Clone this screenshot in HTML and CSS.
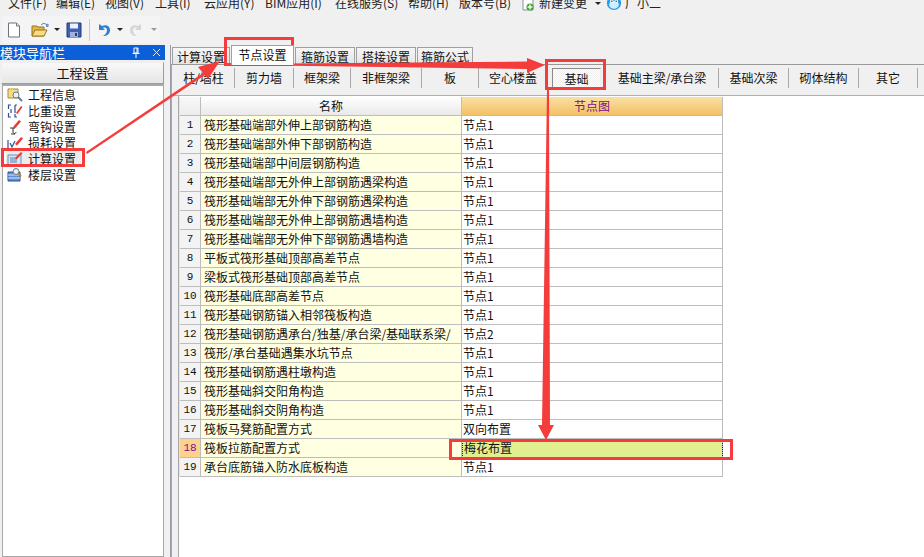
FILE: index.html
```html
<!DOCTYPE html>
<html lang="zh">
<head>
<meta charset="utf-8">
<title>工程设置</title>
<link rel="stylesheet" href="styles.css">
</head>
<body>
<div class="app">
  <header class="top">
    <nav class="menu">
      <span>文件(F)</span><span>编辑(E)</span><span>视图(V)</span><span>工具(I)</span><span>云应用(Y)</span><span>BIM应用(I)</span><span>在线服务(S)</span><span>帮助(H)</span><span>版本号(B)</span>
      <span class="menu-extra">
        <svg class="ic16" viewBox="0 0 16 16"><path d="M3 1h7l3 3v11H3z" fill="#fff" stroke="#7f93a8"/><path d="M10 1v3h3" fill="#dfe8f0" stroke="#7f93a8"/><circle cx="10" cy="12" r="3.6" fill="#3fa52d"/><path d="M10 9.6v4.8M7.6 12h4.8" stroke="#fff" stroke-width="1.4"/></svg>
        <span class="menu-new">新建变更</span>
        <i class="caret dark"></i>
        <svg class="mascot" viewBox="0 0 18 18"><circle cx="9" cy="9" r="8" fill="#2a9be8"/><ellipse cx="9" cy="11" rx="5.5" ry="4.5" fill="#cfeeff"/><circle cx="6.4" cy="7" r="1.8" fill="#fff"/><circle cx="11.6" cy="7" r="1.8" fill="#fff"/><circle cx="6.6" cy="7" r=".8" fill="#123"/><circle cx="11.4" cy="7" r=".8" fill="#123"/></svg>
        <span>广小二</span>
      </span>
    </nav>
    <div class="toolbar">
      <svg class="ic16" viewBox="0 0 16 16"><path d="M2.5 1h8l3 3v11h-11z" fill="#fff" stroke="#6d7480"/><path d="M10.500 1v3h3" fill="#e4e8ee" stroke="#6d7480"/></svg>
      <svg class="ic18 open" viewBox="0 0 18 16"><path d="M1 4h5l1 1h6v9H1z" fill="#e3b64c" stroke="#9a7418"/><path d="M1 14l3-6h12l-3 6z" fill="#f8dc86" stroke="#9a7418"/><path d="M10 3c2-2 4-2 6 0l-1 1 2 .5V2l-1 .5" fill="none" stroke="#3b79c9"/></svg>
      <i class="caret dark"></i>
      <svg class="ic16 save" viewBox="0 0 16 16"><path d="M1 1h14v14H1z" fill="#3f5fb0" stroke="#27397a"/><path d="M4 1.500h8v5H4z" fill="#eef2fa"/><path d="M4 10h8v5H4z" fill="#9fb2dc"/><path d="M9 11h2v3H9z" fill="#27397a"/></svg>
      <i class="tool-sep"></i>
      <svg class="ic16 undo" viewBox="0 0 16 16"><path d="M3 2v6h6L7 6c2-1 4 0 4 2 0 3-2 5-4 6 4 0 7-2 7-6 0-4-4-6-8-4z" fill="#2f7fd6"/></svg>
      <i class="caret dark"></i>
      <svg class="ic16 redo" viewBox="0 0 16 16"><path d="M13 2v6H7l2-2c-2-1-4 0-4 2 0 3 2 5 4 6-4 0-7-2-7-6 0-4 4-6 8-4z" fill="#d4d6d8"/></svg>
      <i class="caret light"></i>
    </div>
  </header>

  <div class="body">
    <aside class="side">
      <div class="side-title"><span>模块导航栏</span><span class="side-ctl"><svg class="pin" viewBox="0 0 10 11"><path d="M3 1h4v5H3zM1.500 6.500h7M5 6.500V11M6 1v5" fill="none" stroke="#fff"/></svg><svg class="close" viewBox="0 0 9 9"><path d="M1 1l7 7M8 1L1 8" stroke="#dfe9ff"/></svg></span></div>
      <div class="side-btn">工程设置</div>
      <ul class="side-list">
        <li><svg class="ic16" viewBox="0 0 16 16"><path d="M1 2h10v9H1z" fill="#f0dc9a" stroke="#a58a3c"/><path d="M3 1l1 2 2-1-1 2 2 1-2 .5L4 8 3.500 5.500 1 5l2-1z" fill="#ffe23a"/><circle cx="9" cy="8" r="3" fill="#e8f2fb" stroke="#68788a"/><path d="M11 10l4 4" stroke="#68788a" stroke-width="2"/></svg><span>工程信息</span></li>
        <li><svg class="ic16" viewBox="0 0 16 16"><path d="M4 2H1.500v4M1.500 10v4H4M4 6v4M8 2h2M10 14H8v-3M8 2v8" fill="none" stroke="#2c4f96" stroke-width="1.200"/><path d="M9 10l5-7 1.500 1-5 7z" fill="#ea3b33"/></svg><span>比重设置</span></li>
        <li><svg class="ic16" viewBox="0 0 16 16"><path d="M6 9v4c0 2 3 2 3 0" fill="none" stroke="#333"/><path d="M3 9h5M4 15h4" stroke="#333"/><path d="M6 8l6-7 2 1.500-6 7z" fill="#ea3b33"/></svg><span>弯钩设置</span></li>
        <li><svg class="ic16" viewBox="0 0 16 16"><path d="M1 5v9h8M3 8l2 4 3-6" fill="none" stroke="#2c4f96" stroke-width="1.200"/><path d="M8 9l6-7 2 1.500-6 7z" fill="#ea3b33"/></svg><span>损耗设置</span></li>
        <li class="active"><svg class="ic16" viewBox="0 0 16 16"><path d="M1 4h13v10H1z" fill="#d8e8f6" stroke="#6f8db0"/><path d="M3 7h6M3 9h7M3 11h7" stroke="#5a7fb0"/><path d="M8 7l6-6 1.500 1.500-6 6z" fill="#ea3b33"/></svg><span>计算设置</span></li>
        <li><svg class="ic16" viewBox="0 0 16 16"><path d="M1 5h12v9H1z" fill="#5f8fd6" stroke="#2d4f92"/><path d="M1 8h12M1 11h12" stroke="#dce8f8"/><circle cx="9" cy="4.500" r="3" fill="#e6eef6" stroke="#68788a"/><path d="M11 6.500l3 3" stroke="#b08a30" stroke-width="2"/></svg><span>楼层设置</span></li>
      </ul>
    </aside>
    <div class="splitter"></div>
    <main class="main">
      <div class="tabs">
        <span class="tab t1">计算设置</span><span class="tab t2 on">节点设置</span><span class="tab t3">箍筋设置</span><span class="tab t4">搭接设置</span><span class="tab t5">箍筋公式</span>
      </div>
      <div class="subtabs">
        <span>柱/墙柱</span><span>剪力墙</span><span>框架梁</span><span>非框架梁</span><span>板</span><span>空心楼盖</span><span class="sel"><b>基础</b></span><span>基础主梁/承台梁</span><span>基础次梁</span><span>砌体结构</span><span>其它</span>
      </div>
      <div class="content">
        <table class="grid">
          <colgroup><col class="c-n"><col class="c-a"><col class="c-b"></colgroup>
          <thead><tr><th class="corner"></th><th class="h-name">名称</th><th class="h-val">节点图</th></tr></thead>
          <tbody>
            <tr><td class="n">1</td><td class="a">筏形基础端部外伸上部钢筋构造</td><td class="b">节点1</td></tr>
            <tr><td class="n">2</td><td class="a">筏形基础端部外伸下部钢筋构造</td><td class="b">节点1</td></tr>
            <tr><td class="n">3</td><td class="a">筏形基础端部中间层钢筋构造</td><td class="b">节点1</td></tr>
            <tr><td class="n">4</td><td class="a">筏形基础端部无外伸上部钢筋遇梁构造</td><td class="b">节点1</td></tr>
            <tr><td class="n">5</td><td class="a">筏形基础端部无外伸下部钢筋遇梁构造</td><td class="b">节点1</td></tr>
            <tr><td class="n">6</td><td class="a">筏形基础端部无外伸上部钢筋遇墙构造</td><td class="b">节点1</td></tr>
            <tr><td class="n">7</td><td class="a">筏形基础端部无外伸下部钢筋遇墙构造</td><td class="b">节点1</td></tr>
            <tr><td class="n">8</td><td class="a">平板式筏形基础顶部高差节点</td><td class="b">节点1</td></tr>
            <tr><td class="n">9</td><td class="a">梁板式筏形基础顶部高差节点</td><td class="b">节点1</td></tr>
            <tr><td class="n">10</td><td class="a">筏形基础底部高差节点</td><td class="b">节点1</td></tr>
            <tr><td class="n">11</td><td class="a">筏形基础钢筋锚入相邻筏板构造</td><td class="b">节点1</td></tr>
            <tr><td class="n">12</td><td class="a">筏形基础钢筋遇承台/独基/承台梁/基础联系梁/</td><td class="b">节点2</td></tr>
            <tr><td class="n">13</td><td class="a">筏形/承台基础遇集水坑节点</td><td class="b">节点1</td></tr>
            <tr><td class="n">14</td><td class="a">筏形基础钢筋遇柱墩构造</td><td class="b">节点1</td></tr>
            <tr><td class="n">15</td><td class="a">筏形基础斜交阳角构造</td><td class="b">节点1</td></tr>
            <tr><td class="n">16</td><td class="a">筏形基础斜交阴角构造</td><td class="b">节点1</td></tr>
            <tr><td class="n">17</td><td class="a">筏板马凳筋配置方式</td><td class="b">双向布置</td></tr>
            <tr class="cur"><td class="n">18</td><td class="a">筏板拉筋配置方式</td><td class="b">梅花布置</td></tr>
            <tr><td class="n">19</td><td class="a">承台底筋锚入防水底板构造</td><td class="b">节点1</td></tr>
          </tbody>
        </table>
      </div>
    </main>
  </div>

  <svg class="notes" viewBox="0 0 924 557">
    <g fill="none" stroke="#f43c3c" stroke-width="3">
      <rect x="225.500" y="38.500" width="67" height="26"/>
      <rect x="546.500" y="60.500" width="58" height="28"/>
      <rect x="2.500" y="149.500" width="81" height="16"/>
      <rect x="450.500" y="440.500" width="281" height="18"/>
    </g>
    <g fill="#f43c3c">
      <path d="M86 152L203 73 198 67 220 61 208 79 205 75 87 154z"/>
      <path d="M236 64L527 61.500V58L545 65 527 73V69L236 65z"/>
      <path d="M547 90H549L550 425H554L546 440 538 425H542z"/>
    </g>
  </svg>
</div>
</body>
</html>
```
FILE: styles.css
```css
* { box-sizing: border-box; }
html, body { margin: 0; padding: 0; }
body { width: 924px; height: 557px; overflow: hidden; background: #f0f0f0; color: #111; font: 12px/16px "Noto Sans CJK SC", "Liberation Sans", sans-serif; }
.app { position: relative; width: 924px; height: 557px; display: flex; flex-direction: column; }
svg { display: block; flex: none; }
.ic16 { width: 16px; height: 16px; }
.ic18 { width: 18px; height: 18px; }
.mascot { width: 16px; height: 16px; margin-right: 3px; }

.top { height: 45px; flex: none; overflow: hidden; background: #f0f0f0; }
.menu { height: 18px; margin-top: -6px; padding-left: 8px; display: grid; grid-template-columns: 48px 49px 50px 49px 61px 70px 73px 51px 61px 1fr; align-items: center; white-space: nowrap; color: #222; }
.menu-extra { display: flex; align-items: center; }
.menu-new { margin-left: 3px; }
.menu-extra .caret { margin: 0 5px 0 8px; }
.toolbar { margin: 4px 0 0 2px; width: 158px; height: 27px; padding-left: 4px; background: #f4f4f4; border-radius: 3px; display: flex; align-items: center; }
.open { margin-left: 9px; }
.caret { display: block; flex: none; width: 0; height: 0; border: 3px solid transparent; border-top: 3px solid #222; border-bottom: 0; margin-left: 5px; }
.caret.light { border-top-color: #999; margin-left: 7px; }
.save { margin-left: 6px; }
.tool-sep { width: 1px; height: 22px; background: #c8c8c8; margin: 0 6px 0 7px; }
.redo { margin-left: 5px; }

.body { flex: 1; min-height: 0; display: flex; }
.side { width: 165px; flex: none; display: flex; flex-direction: column; }
.side-title { height: 15px; background: #0b5fd9; color: #fff; font-size: 13px; line-height: 14px; display: flex; justify-content: space-between; align-items: center; padding-right: 4px; }
.side-ctl { display: flex; align-items: center; gap: 11px; }
.pin { width: 10px; height: 11px; }
.close { width: 9px; height: 9px; }
.side-btn { height: 22px; margin: 2px 1px 0 1px; background: linear-gradient(#f8f8f8, #e6e6e6); border: 1px solid #9c9c9c; border-top-color: #eee; border-left-color: #eee; text-align: center; line-height: 20px; font-size: 13px; }
.side-list { flex: 1; list-style: none; margin: 0 1px 0 2px; padding: 1px 0 0 3px; background: #fff; border: 1px solid #a8a8a8; border-top-width: 2px; }
.side-list li { height: 16px; display: flex; align-items: center; gap: 5px; padding-left: 1px; white-space: nowrap; }
.side-list li.active { background: #ececec; border-radius: 2px; margin-right: 82px; }

.splitter { width: 6px; flex: none; background: #f0f0f0; border-right: 1px solid #9a9aa6; }
.main { flex: 1; min-width: 0; display: flex; flex-direction: column; }
.tabs { height: 19px; flex: none; display: grid; grid-template-columns: 58px 63px 60px 60px 56px; column-gap: 1px; align-items: end; padding-left: 1px; }
.tab { height: 18px; line-height: 18px; text-align: center; background: linear-gradient(#f6f6f6, #e4e4e4); border: 1px solid #a0a0a0; border-bottom: 0; white-space: nowrap; }
.tab.on { height: 20px; background: #fff; line-height: 17px; position: relative; z-index: 1; }
.subtabs { height: 32px; flex: none; background: #f0f0f0; border-top: 1px solid #999; border-bottom: 1px solid #b0b0b0; border-left: 1px solid #aaa; display: grid; grid-template-columns: 62px 59px 57px 71px 57px 69px 58px 113px 70px 70px 59px; align-items: center; padding: 0 0 4px 1px; }
.subtabs span { height: 20px; line-height: 20px; text-align: center; border-right: 1px solid #a8a8a8; white-space: nowrap; }
.subtabs .sel { padding: 0 4px; }
.subtabs .sel b { display: block; height: 20px; font-weight: 400; line-height: 20px; border: 1px solid #8a8a8a; border-right-color: #eee; border-bottom-color: #eee; background: repeating-conic-gradient(#fff 0 25%, #eee 0 50%) 0 0 / 2px 2px; }
.content { flex: 1; min-height: 0; display: flex; background: #fff; border-left: 1px solid #aaa; position: relative; }
.content::before { content: ""; width: 6px; flex: none; background: #f0f0f0; border-right: 1px solid #a8a8a8; }
.grid { table-layout: fixed; width: 543px; height: 380px; border-collapse: separate; border-spacing: 0; margin: 1px 0 0 0; align-self: flex-start; border-left: 1px solid #e4e4e4; }
.c-n { width: 21px; }
.c-a { width: 261px; }
.c-b { width: 261px; }
.grid th, .grid td { padding: 0; height: 19px; font-weight: 400; text-align: left; line-height: 18px; white-space: nowrap; overflow: hidden; border-right: 1px solid #bdbdbd; border-bottom: 1px solid #bdbdbd; }
.grid th.corner { background: linear-gradient(#f8f8f8, #ececec); }
.grid th.h-name { background: linear-gradient(#fff, #e9e9e9); text-align: center; }
.grid th.h-val { background: linear-gradient(#fae0a6, #f3c164); color: #7a0f8a; text-align: center; }
.grid td.n { background: #f3f3f3; text-align: center; font-family: "Liberation Mono", monospace; font-size: 11px; }
.grid td.a { background: #ffffe1; padding-left: 3px; }
.grid td.b { background: #fff; padding-left: 1px; }
.grid tr.cur td.n { background: #fcd28c; color: #7a0f8a; }
.grid tr.cur td.b { background: #e2ef90; outline: 1px dotted #1a1a80; outline-offset: -1px; padding-left: 2px; }

.notes { position: absolute; left: 0; top: 0; width: 924px; height: 557px; pointer-events: none; }
```
